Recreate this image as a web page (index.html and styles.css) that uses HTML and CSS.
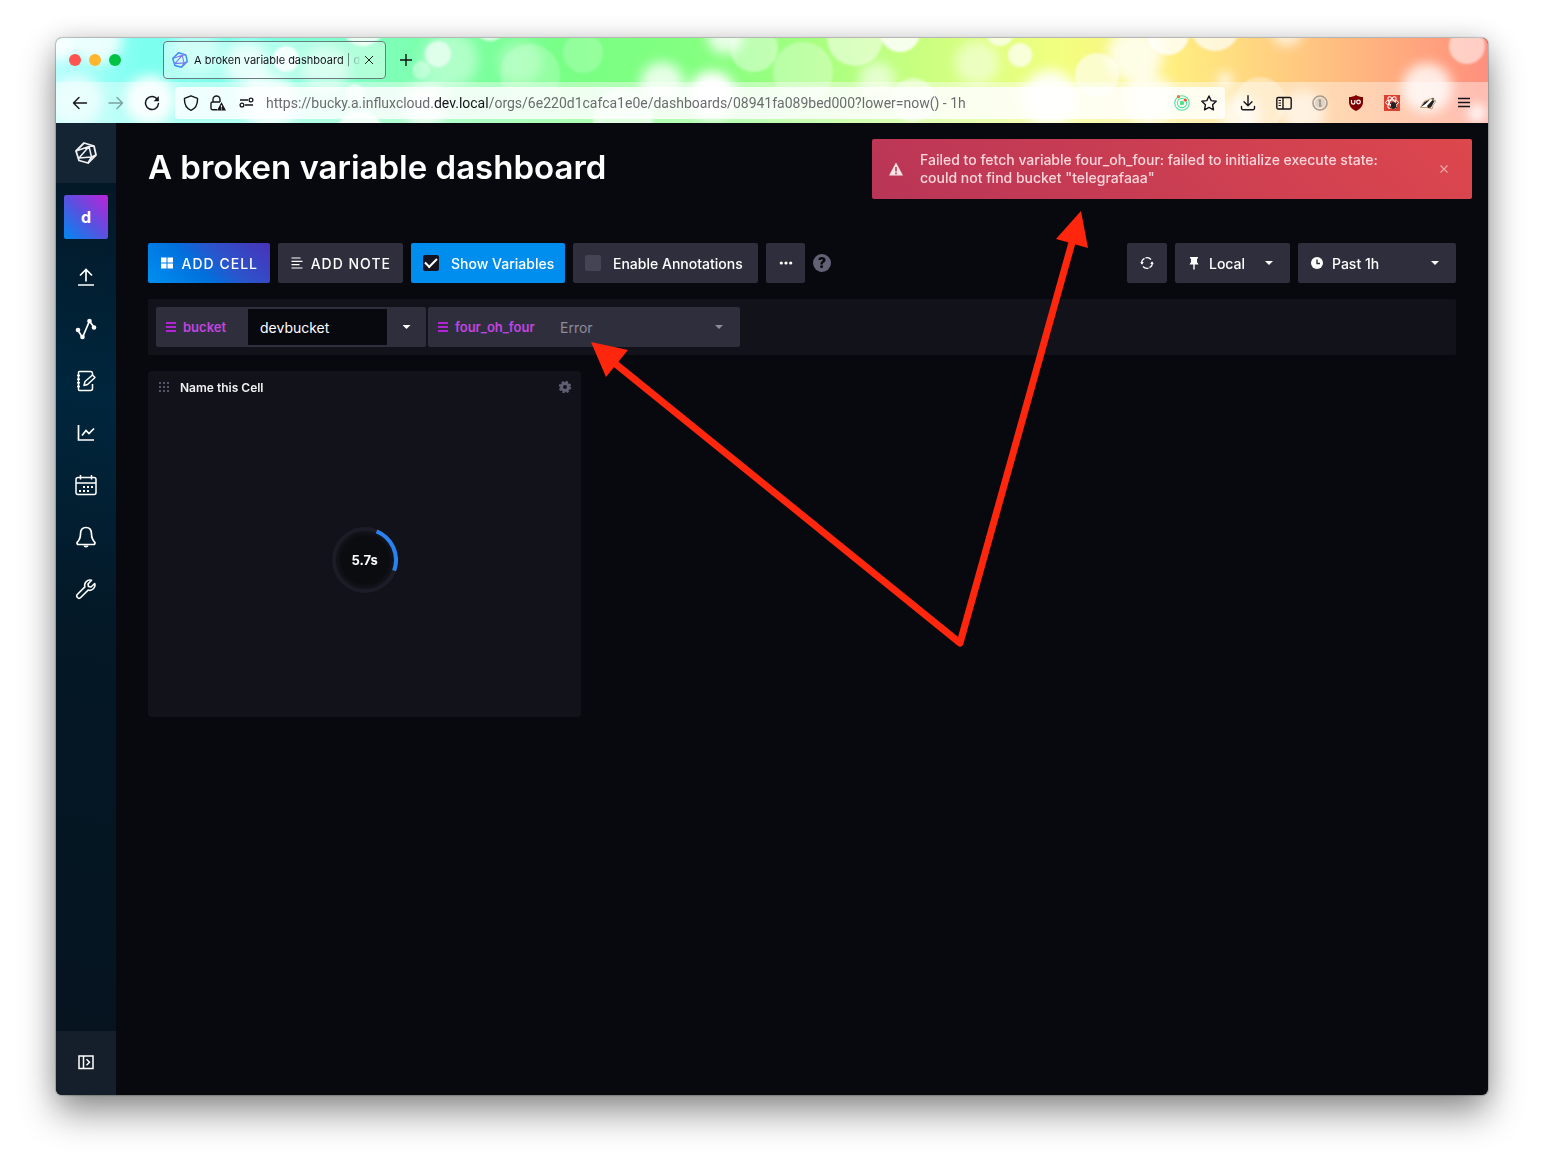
FILE: index.html
```html
<!DOCTYPE html>
<html lang="en">
<head>
    <meta charset="UTF-8" />
    <title>A broken variable dashboard | dev</title>
    <link rel="stylesheet" href="styles.css">
</head>
<body>

<div class="window">

    <header class="chrome">
        <!-- bokeh theme -->
        <svg class="theme" viewBox="56 38 1432 85" preserveAspectRatio="none" aria-hidden="true">
            <defs>
                <linearGradient id="rainbow">
                    <stop offset="0" stop-color="#b4fdfd" />
                    <stop offset="0.06" stop-color="#7dfff0" />
                    <stop offset="0.14" stop-color="#7dffe8" />
                    <stop offset="0.24" stop-color="#7dffb4" />
                    <stop offset="0.36" stop-color="#78ff84" />
                    <stop offset="0.46" stop-color="#86ff80" />
                    <stop offset="0.6" stop-color="#c8ff80" />
                    <stop offset="0.7" stop-color="#f2ff80" />
                    <stop offset="0.78" stop-color="#ffee80" />
                    <stop offset="0.87" stop-color="#ffc880" />
                    <stop offset="1" stop-color="#ff8f7d" />
                </linearGradient>
                <filter id="soft" x="-50%" y="-50%" width="200%" height="200%"><feGaussianBlur stdDeviation="6" /></filter>
                <filter id="edge" x="-20%" y="-20%" width="140%" height="140%"><feGaussianBlur stdDeviation="1" /></filter>
            </defs>
            <rect x="56" y="38" width="1432" height="85" fill="url(#rainbow)" />
            <g fill="#fff" filter="url(#soft)">
                <circle cx="60" cy="45" r="16" opacity=".9" />
                <circle cx="98" cy="40" r="24" opacity=".8" />
                <circle cx="77" cy="100" r="26" opacity=".6" />
                <circle cx="150" cy="100" r="25" opacity=".9" />
                <circle cx="195" cy="50" r="24" opacity=".4" />
                <circle cx="247" cy="64" r="22" opacity=".7" />
                <circle cx="270" cy="102" r="28" opacity=".8" />
                <circle cx="325" cy="70" r="24" opacity=".5" />
                <circle cx="425" cy="105" r="22" opacity=".8" />
                <circle cx="450" cy="60" r="28" opacity=".4" />
                <circle cx="520" cy="62" r="22" opacity=".3" />
                <circle cx="662" cy="84" r="22" opacity=".8" />
                <circle cx="712" cy="95" r="24" />
                <circle cx="725" cy="36" r="18" opacity=".8" />
                <circle cx="877" cy="80" r="18" opacity=".6" />
                <circle cx="977" cy="63" r="22" opacity=".5" />
                <circle cx="1050" cy="98" r="28" opacity=".9" />
                <circle cx="1135" cy="55" r="28" opacity=".8" />
                <circle cx="1150" cy="100" r="26" opacity=".7" />
                <circle cx="1225" cy="80" r="7" />
                <circle cx="1240" cy="115" r="20" opacity=".7" />
                <circle cx="1303" cy="112" r="22" opacity=".6" />
                <circle cx="1287" cy="30" r="16" opacity=".7" />
                <circle cx="1427" cy="88" r="25" opacity=".8" />
                <circle cx="1477" cy="113" r="9" />
            </g>
            <g fill="#fff" filter="url(#edge)">
                <circle cx="286" cy="59" r="13" opacity=".85" />
                <circle cx="363" cy="24" r="22" opacity=".8" />
                <circle cx="438" cy="54" r="13" opacity=".6" />
                <circle cx="421" cy="70" r="9" opacity=".4" />
                <circle cx="360" cy="135" r="24" opacity=".8" />
                <circle cx="355" cy="93" r="9" opacity=".6" />
                <circle cx="490" cy="24" r="17" opacity=".7" />
                <circle cx="530" cy="74" r="30" opacity=".2" />
                <circle cx="583" cy="53" r="20" opacity=".2" />
                <circle cx="623" cy="118" r="30" opacity=".6" />
                <circle cx="754" cy="48" r="24" opacity=".4" />
                <circle cx="803" cy="72" r="30" opacity=".3" />
                <circle cx="855" cy="38" r="28" opacity=".5" />
                <circle cx="900" cy="32" r="20" opacity=".85" />
                <circle cx="913" cy="100" r="22" opacity=".5" />
                <circle cx="1000" cy="32" r="14" opacity=".7" />
                <circle cx="1020" cy="55" r="12" opacity=".7" />
                <circle cx="1097" cy="75" r="22" opacity=".6" />
                <circle cx="1168" cy="34" r="21" opacity=".8" />
                <circle cx="1215" cy="26" r="25" opacity=".7" />
                <circle cx="1260" cy="103" r="26" opacity=".35" />
                <circle cx="1467" cy="46" r="18" opacity=".55" />
            </g>
        </svg>

        <div class="tab-bar">
            <div class="lights">
                <span class="light light-red"></span>
                <span class="light light-yellow"></span>
                <span class="light light-green"></span>
            </div>
            <div class="tab">
                <svg width="16" height="16" viewBox="0 0 22 22" fill="none" stroke="#3a8cf5" stroke-width="2" stroke-linejoin="round">
                    <path d="M1 9L9 1l10 3 2 9-8 8-9-2.500z" />
                    <path d="M1 9l13-4.500L19 4M14 4.500L4 16l12.500-1M16.500 15L21 13M16.500 15L13 21M16.500 15L14 4.500" stroke="#7d78f2" stroke-width="1.500" />
                </svg>
                <span class="tab-title">A broken variable dashboard | d</span>
                <button class="tab-close" type="button" aria-label="Close tab">
                    <svg width="10" height="10" viewBox="0 0 10 10" fill="none" stroke="#222"><path d="M1 1l8 8M9 1L1 9" /></svg>
                </button>
            </div>
            <button class="new-tab" type="button" aria-label="New tab">
                <svg width="14" height="14" viewBox="0 0 14 14" fill="none" stroke="#111" stroke-width="1.400"><path d="M7 1v12M1 7h12" /></svg>
            </button>
        </div>

        <div class="nav-bar">
            <button class="nav-btn" type="button" aria-label="Back">
                <svg width="16" height="16" viewBox="0 0 16 16" fill="none" stroke="#15141a" stroke-width="1.400" stroke-linecap="round" stroke-linejoin="round"><path d="M14.500 8H1.500M7 2.500L1.500 8 7 13.500" /></svg>
            </button>
            <button class="nav-btn nav-off" type="button" aria-label="Forward" disabled>
                <svg width="16" height="16" viewBox="0 0 16 16" fill="none" stroke="#15141a" stroke-width="1.400" stroke-linecap="round" stroke-linejoin="round"><path d="M1 8h13.500M9 2.500L14.500 8 9 13.500" /></svg>
            </button>
            <button class="nav-btn" type="button" aria-label="Reload">
                <svg width="16" height="16" viewBox="0 0 16 16" fill="none" stroke="#15141a" stroke-width="1.500" stroke-linecap="round"><path d="M13.500 4.500A6.500 6.500 0 1 0 14.500 8.500" /><path d="M14.800 1v5.200H9.600z" fill="#15141a" stroke="none" /></svg>
            </button>

            <div class="url-bar">
                <svg width="16" height="16" viewBox="0 0 16 16" fill="none" stroke="#15141a" stroke-width="1.400" stroke-linejoin="round"><path d="M8 .8l6.500 2.500c.3 5.500-1.500 10-6.500 12C3 13.300 1.200 8.800 1.500 3.300z" /></svg>
                <svg width="16" height="16" viewBox="0 0 16 16" fill="none" stroke="#15141a" stroke-width="1.400"><path d="M7 14.800H2.500A1.500 1.500 0 0 1 1 13.300V8.500A1.500 1.500 0 0 1 2.500 7h7.500M3 7V4.500a3.500 3.500 0 0 1 7 0V7" /><path d="M11.500 7L16 15.500H7z" fill="#15141a" stroke="none" /><path d="M11.500 10.200v2.400M11.500 13.500v1" stroke="#fff" stroke-width="1.200" /></svg>
                <svg width="18" height="16" viewBox="0 0 18 16" fill="none" stroke="#15141a" stroke-width="1.300"><path d="M3 5h8M8 10h8" /><circle cx="14" cy="5" r="1.900" /><circle cx="5" cy="10" r="1.900" /></svg>
                <div class="url" role="textbox" aria-label="Address">https://bucky.a.influxcloud.<span class="url-host">dev.local</span>/orgs/6e220d1cafca1e0e/dashboards/08941fa089bed000?lower=now() - 1h</div>
                <svg width="16" height="16" viewBox="0 0 16 16" fill="none" stroke="#4fe0a8" stroke-width="1.100"><circle cx="8" cy="8" r="7.300" /><circle cx="8" cy="8" r="4.600" /><circle cx="8" cy="8" r="2.200" fill="#4fe08a" stroke="none" /><circle cx="4.500" cy="1.700" r="1.600" fill="#f0743a" stroke="none" /><circle cx="11.300" cy="5" r="1.600" fill="#f0502a" stroke="none" /></svg>
                <svg width="16" height="16" viewBox="0 0 16 16" fill="none" stroke="#15141a" stroke-width="1.400" stroke-linejoin="round"><path d="M8 1l2.200 4.600 5 .7-3.600 3.500.9 5L8 12.400 3.500 14.800l.9-5L.8 6.300l5-.7z" /></svg>
            </div>

            <button class="nav-btn" type="button" aria-label="Downloads">
                <svg width="16" height="16" viewBox="0 0 16 16" fill="none" stroke="#15141a" stroke-width="1.400" stroke-linecap="round" stroke-linejoin="round"><path d="M8 .8v9.700M4 6.800l4 4 4-4M1.500 11.500v1.700a1.500 1.500 0 0 0 1.500 1.500h10a1.500 1.500 0 0 0 1.500-1.500v-1.700" /></svg>
            </button>
            <button class="nav-btn" type="button" aria-label="Sidebars">
                <svg width="16" height="16" viewBox="0 0 16 16" fill="none" stroke="#15141a" stroke-width="1.400"><rect x=".8" y="2.500" width="14.400" height="11.500" rx="1.500" /><path d="M7 2.500V14" /><path d="M2.500 5.500H5M2.500 8H5M2.500 10.500H5" stroke-width="1.100" /></svg>
            </button>
            <button class="nav-btn" type="button" aria-label="Password manager">
                <svg width="16" height="16" viewBox="0 0 16 16" fill="none" stroke="#a69b90" stroke-width="1.600"><circle cx="8" cy="8" r="7" /><circle cx="8" cy="8" r="5" fill="#ddd2c6" stroke="none" /><path d="M8 4.500v7M6.500 5.200H8M7 10.800h2.500" stroke-width="2" /></svg>
            </button>
            <button class="nav-btn" type="button" aria-label="uBlock Origin">
                <svg width="16" height="16" viewBox="0 0 16 16"><path d="M8 0c2 1.500 4.500 2 7 2v5c0 4.500-3 7-7 9-4-2-7-4.500-7-9V2c2.500 0 5-.5 7-2z" fill="#800000" /><path d="M3.500 5v2.500a1.700 1.700 0 0 0 3.400 0V5" fill="none" stroke="#fff" stroke-width="1.200" /><circle cx="10.500" cy="7" r="1.800" fill="none" stroke="#fff" stroke-width="1.200" /></svg>
            </button>
            <button class="nav-btn" type="button" aria-label="React tools">
                <svg width="16" height="16" viewBox="0 0 16 16"><rect width="16" height="16" fill="#d9402f" /><g fill="none" stroke="#fff"><ellipse cx="8" cy="7.500" rx="6.500" ry="2.500" /><ellipse cx="8" cy="7.500" rx="6.500" ry="2.500" transform="rotate(60 8 7.500)" /><ellipse cx="8" cy="7.500" rx="6.500" ry="2.500" transform="rotate(-60 8 7.500)" /></g><ellipse cx="9.500" cy="10.500" rx="2.600" ry="3.500" fill="#222" /><path d="M6 8l7 5M13 8l-7 5" stroke="#222" /></svg>
            </button>
            <button class="nav-btn" type="button" aria-label="Privacy Badger">
                <svg width="16" height="16" viewBox="0 0 16 16"><path d="M.5 12.500L4 6.500 10 4l3.500-1 .5 2.500 2 .5-3 4.500-1 3.500-5-1.500z" fill="#fff" stroke="#b8793c" stroke-width=".7" /><path d="M1 12l3.500-5L10 4.500 5.500 9zM7 11l5.500-6 2 1L11 12.500l-3 .5zM11 4l2.500-1v2z" fill="#222" /></svg>
            </button>
            <button class="nav-btn" type="button" aria-label="Menu">
                <svg width="16" height="16" viewBox="0 0 16 16" fill="none" stroke="#15141a" stroke-width="1.300"><path d="M2 3.500h12M2 7.500h12M2 11.500h12" /></svg>
            </button>
        </div>
    </header>

    <div class="app">
        <nav class="side">
            <a class="side-logo" href="#" aria-label="Home">
                <svg width="22" height="22" viewBox="0 0 22 22" fill="none" stroke="#f1f1f3" stroke-width="1.800" stroke-linejoin="round"><path d="M1 9L9 1l10 3 2 9-8 8-9-2.500z" /><path d="M1 9l13-4.500L19 4M14 4.500L4 16l12.500-1M16.500 15L21 13M16.500 15L13 21M16.500 15L14 4.500" stroke-width="1.500" /></svg>
            </a>
            <a class="avatar" href="#">d</a>
            <a class="side-item" href="#" aria-label="Load data">
                <svg width="22" height="22" viewBox="0 0 22 22" fill="none" stroke="#fff" stroke-width="1.700"><path d="M11 15.500V3.500M5 9.500L11 3.500 17 9.500M3 19h16" /></svg>
            </a>
            <a class="side-item" href="#" aria-label="Data explorer">
                <svg width="22" height="22" viewBox="0 0 22 22" fill="none" stroke="#fff" stroke-width="1.700"><path d="M3 12.500l4.500 7L14.500 3 19.500 10" /><g fill="#fff" stroke="none"><circle cx="3" cy="12" r="2.300" /><circle cx="7.500" cy="19" r="2.300" /><circle cx="14.500" cy="3" r="2.300" /><circle cx="19" cy="9.500" r="2.300" /></g></svg>
            </a>
            <a class="side-item" href="#" aria-label="Notebooks">
                <svg width="22" height="22" viewBox="0 0 22 22" fill="none" stroke="#fff" stroke-width="1.500" stroke-linejoin="round"><path d="M17.500 5V3.300A2 2 0 0 0 15.500 1.500h-11a1 1 0 0 0-1 1v17a1 1 0 0 0 1 1h11a2 2 0 0 0 2-2V14" /><path d="M2 5.500h3M2 9.200h3M2 12.800h3M2 16.500h3" /><path d="M9 15.500l1-4 7.500-6.500 2.500 2.500-7.500 7z" /></svg>
            </a>
            <a class="side-item" href="#" aria-label="Dashboards">
                <svg width="22" height="22" viewBox="0 0 22 22" fill="none" stroke="#fff" stroke-width="1.700"><path d="M3.500 3v15H19M7 13.500L11 8.500l3 3L19 6.500" /></svg>
            </a>
            <a class="side-item" href="#" aria-label="Tasks">
                <svg width="22" height="22" viewBox="0 0 22 22" fill="none" stroke="#fff" stroke-width="1.500"><rect x="1" y="3.500" width="20" height="17" rx="2" /><path d="M1 9h20M5.500 1v4.500M16.500 1v4.500" /><path d="M8 13h2M12 13h2M16 13h2M4 17h2M8 17h2M12 17h2" stroke-width="2" /></svg>
            </a>
            <a class="side-item" href="#" aria-label="Alerts">
                <svg width="22" height="22" viewBox="0 0 22 22" fill="none" stroke="#fff" stroke-width="1.700" stroke-linejoin="round"><path d="M11 1.500c4 0 5.500 3 5.500 6.500 0 5 1.500 6.500 3.500 8.500 0 1.500-.5 2-1.500 2h-15c-1 0-1.500-.5-1.500-2 2-2 3.500-3.500 3.500-8.500C5.500 4.500 7 1.500 11 1.500z" /><path d="M8.500 19.500a2.500 2 0 0 0 5 0z" fill="#fff" stroke="none" /></svg>
            </a>
            <a class="side-item" href="#" aria-label="Settings">
                <svg width="22" height="22" viewBox="0 0 22 22" fill="none" stroke="#fff" stroke-width="1.600" stroke-linejoin="round"><path d="M16.500 2.300a5.300 5.300 0 0 0-6.600 6.600L2.500 16.300a2.200 2.200 0 0 0 3.200 3.200l7.400-7.400a5.300 5.300 0 0 0 6.600-6.600L16 9l-2.500-.5L13 6z" /></svg>
            </a>
            <button class="side-toggle" type="button" aria-label="Expand navigation">
                <svg width="16" height="16" viewBox="0 0 16 16" fill="none" stroke="#fff" stroke-width="1.500"><rect x="1" y="1" width="14" height="12.500" /><path d="M5.500 1v12.500M8.500 4.300l3 3-3 3" /></svg>
            </button>
        </nav>

        <main class="page">
            <h1 class="page-title">A broken variable dashboard</h1>

            <div class="toolbar">
                <button class="btn btn-primary" type="button">
                    <svg width="14" height="14" viewBox="0 0 14 14" fill="#fff"><path d="M1 1.500h5.500v5H1zM7.500 1.500H13v5H7.500zM1 7.500h5.500v5H1zM7.500 7.500H13v5H7.500z" /></svg>
                    ADD CELL
                </button>
                <button class="btn btn-note" type="button">
                    <svg width="14" height="14" viewBox="0 0 14 14" fill="none" stroke="#fff" stroke-width="1.200"><path d="M1.500 2h9M1.500 5.300h11M1.500 8.700h8M1.500 12h11" /></svg>
                    ADD NOTE
                </button>
                <label class="toggle toggle-on"><input type="checkbox" checked> Show Variables</label>
                <label class="toggle"><input type="checkbox"> Enable Annotations</label>
                <button class="btn btn-more" type="button" aria-label="More">
                    <svg width="14" height="14" viewBox="0 0 14 14" fill="#fff"><circle cx="2.300" cy="7" r="1.600" /><circle cx="7" cy="7" r="1.600" /><circle cx="11.700" cy="7" r="1.600" /></svg>
                </button>
                <button class="help" type="button" aria-label="Help">?</button>

                <div class="toolbar-right">
                    <button class="btn btn-square" type="button" aria-label="Refresh">
                        <svg width="14" height="14" viewBox="0 0 14 14" fill="none" stroke="#fff" stroke-width="1.200"><path d="M1.800 8A5.200 5.200 0 0 1 4.500 2.400M5.500 1.900a5.200 5.200 0 0 1 5.500 1.600M12.200 6a5.200 5.200 0 0 1-2.700 5.600M8.500 12.100A5.200 5.200 0 0 1 3 10.500" /><path d="M.3 6h3.400L2 8.800zM10.300 8h3.400L12 5.200z" fill="#fff" stroke="none" /></svg>
                    </button>
                    <div class="picker picker-zone">
                        <svg width="14" height="14" viewBox="0 0 14 14" fill="#fff"><path d="M3 1h8v1.500h-1V6l1.500 2.500h-9L4 6V2.500H3zM6.300 8.500h1.400v5H6.300z" /></svg>
                        <select aria-label="Time zone"><option>Local</option><option>UTC</option></select>
                        <span class="caret"></span>
                    </div>
                    <div class="picker picker-range">
                        <svg width="14" height="14" viewBox="0 0 14 14"><circle cx="7" cy="7" r="6" fill="#fff" /><path d="M7 3.500V7.500h3" fill="none" stroke="#2e2d3d" stroke-width="1.400" /></svg>
                        <select aria-label="Time range"><option>Past 1h</option><option>Past 6h</option></select>
                        <span class="caret"></span>
                    </div>
                </div>
            </div>

            <div class="variables">
                <div class="variable">
                    <label class="variable-name" for="bucket"><span class="bars"></span>bucket</label>
                    <input class="variable-input" type="text" id="bucket" value="devbucket">
                    <button class="variable-open" type="button" aria-label="Open bucket list"><span class="caret"></span></button>
                </div>
                <div class="variable variable-error">
                    <label class="variable-name" for="fourOhFour"><span class="bars"></span>four_oh_four</label>
                    <select id="fourOhFour" disabled><option>Error</option></select>
                    <span class="caret"></span>
                </div>
            </div>

            <div class="cells">
                <section class="cell">
                    <div class="cell-head">
                        <svg width="12" height="12" viewBox="0 0 12 12" fill="#545466"><path d="M1 1h2v2H1zM5 1h2v2H5zM9 1h2v2H9zM1 5h2v2H1zM5 5h2v2H5zM9 5h2v2H9zM1 9h2v2H1zM5 9h2v2H5zM9 9h2v2H9z" /></svg>
                        <h2 class="cell-name">Name this Cell</h2>
                        <button class="cell-gear" type="button" aria-label="Configure cell">
                            <svg width="14" height="14" viewBox="0 0 14 14" fill="none" stroke="#5f5e74"><circle cx="7" cy="7" r="3.500" stroke-width="3" /><circle cx="7" cy="7" r="5.300" stroke-width="1.800" stroke-dasharray="2.400 1.763" /></svg>
                        </button>
                    </div>
                    <div class="cell-body">
                        <div class="timer">
                            <svg class="timer-ring" viewBox="0 0 66 66" fill="none" stroke-width="4">
                                <circle cx="33" cy="33" r="31" stroke="#1c1c27" />
                                <path d="M44.600 4.300A31 31 0 0 1 62.100 43.600" stroke="#2a82f0" />
                            </svg>
                            <span class="timer-text">5.7s</span>
                        </div>
                    </div>
                </section>
            </div>
        </main>

        <div class="alert" role="alert">
            <svg width="14" height="14" viewBox="0 0 14 14"><path d="M7 .5L14 13.500H0z" fill="#fbe3e6" /><path d="M7 5v4.500M7 10.500v1.700" stroke="#bd3a55" stroke-width="1.600" /></svg>
            <p class="alert-text">Failed to fetch variable four_oh_four: failed to initialize execute state: could not find bucket "telegrafaaa"</p>
            <button class="alert-close" type="button" aria-label="Dismiss">
                <svg width="8" height="8" viewBox="0 0 8 8" fill="none" stroke="#f0a5a9" stroke-width="1.200"><path d="M.5 .5l7 7M7.500 .5l-7 7" /></svg>
            </button>
        </div>
    </div>

    <!-- annotation arrows -->
    <svg class="arrows" viewBox="0 0 1432 1057" preserveAspectRatio="xMinYMin meet" aria-hidden="true">
        <path d="M556 323L904 605L1017 201" fill="none" stroke="#ff260e" stroke-width="7" stroke-linejoin="round" />
        <path d="M535 304L572 312L550 339zM1025 173L1000 201L1032 210z" fill="#ff260e" />
    </svg>
</div>

</body>
</html>
```

FILE: styles.css
```css
* {
    box-sizing: border-box;
}
body {
    display: flex;
    min-height: 100vh;
    margin: 0;
    padding: 38px 56px 74px;
    background: #fff;
    font-family: Inter, "Liberation Sans", sans-serif;
    font-size: 14px;
    color: #fff;
}
button, input, select {
    margin: 0;
    padding: 0;
    border: 0;
    background: none;
    font: inherit;
    color: inherit;
}
svg {
    display: block;
    flex: none;
}
a {
    color: inherit;
    text-decoration: none;
}

.window {
    position: relative;
    flex: 1;
    min-width: 0;
    display: flex;
    flex-direction: column;
    border-radius: 6px;
    overflow: hidden;
    background: #08090f;
    box-shadow: 0 0 1px 1px rgba(0, 0, 0, 0.2), 0 0 24px rgba(0, 0, 0, 0.12), 0 18px 36px rgba(0, 0, 0, 0.42);
}

/* browser */
.chrome {
    position: relative;
    color: #15141a;
}
.theme {
    position: absolute;
    inset: 0;
    width: 100%;
    height: 100%;
}
.tab-bar {
    position: relative;
    display: flex;
    align-items: center;
    height: 44px;
    padding: 0 13px;
}
.lights {
    display: flex;
    gap: 8px;
    margin-right: 42px;
}
.light {
    width: 12px;
    height: 12px;
    border-radius: 50%;
}
.light-red {
    background: #ff544d;
}
.light-yellow {
    background: #ffb52e;
}
.light-green {
    background: #00c344;
}
.tab {
    display: flex;
    align-items: center;
    gap: 6px;
    width: 223px;
    height: 38px;
    padding: 0 8px;
    border: 1px solid #6b7a7c;
    border-radius: 4px;
    background: rgba(255, 255, 255, 0.4);
}
.tab-title {
    flex: 1;
    white-space: nowrap;
    font-size: 11px;
    -webkit-mask-image: linear-gradient(to left, transparent, #000 20px);
    mask-image: linear-gradient(to left, transparent, #000 20px);
}
.tab-close {
    display: grid;
    place-items: center;
    width: 16px;
    height: 16px;
    margin-left: -6px;
}
.new-tab {
    display: grid;
    place-items: center;
    width: 28px;
    height: 28px;
    margin-left: 6px;
}
.nav-bar {
    position: relative;
    display: flex;
    align-items: center;
    height: 41px;
    padding: 0 6px;
    background: rgba(255, 255, 255, 0.4);
}
.nav-btn {
    display: grid;
    place-items: center;
    flex: none;
    width: 36px;
    height: 32px;
}
.nav-off {
    opacity: 0.4;
}
.url-bar {
    flex: 1;
    min-width: 0;
    display: flex;
    align-items: center;
    gap: 11px;
    height: 32px;
    margin: 0 5px;
    padding: 0 8px;
    border-radius: 4px;
    background: rgba(255, 255, 255, 0.8);
}
.url {
    flex: 1;
    overflow: hidden;
    white-space: nowrap;
    font-family: Roboto, "Liberation Sans", sans-serif;
    font-size: 14px;
    color: #6c6c70;
}
.url-host {
    color: #15141a;
}

/* app */
.app {
    position: relative;
    flex: 1;
    display: flex;
}
.side {
    display: flex;
    flex-direction: column;
    align-items: center;
    width: 60px;
    background: linear-gradient(190deg, #041420 0%, #00263d 28%, #041826 52%, #06131f 100%);
}
.side-logo {
    display: grid;
    place-items: center;
    width: 100%;
    height: 60px;
    margin-bottom: 12px;
    background: #142433;
}
.avatar {
    display: grid;
    place-items: center;
    width: 44px;
    height: 44px;
    margin-bottom: 12px;
    border-radius: 2px;
    background: linear-gradient(45deg, #0088f0 0%, #5a50e0 50%, #be22d8 100%);
    font-size: 16px;
    font-weight: 700;
}
.side-item {
    display: grid;
    place-items: center;
    width: 100%;
    height: 52px;
}
.side-toggle {
    display: grid;
    place-items: center;
    width: 100%;
    height: 64px;
    margin-top: auto;
    background: #141f2b;
}
.page {
    flex: 1;
    min-width: 0;
    padding: 24px 32px;
}
.page-title {
    margin: 0 0 56px;
    font-size: 33px;
    line-height: 40px;
    font-weight: 600;
}
.toolbar {
    display: flex;
    align-items: center;
    gap: 8px;
    margin-bottom: 16px;
    font-weight: 500;
}
.toolbar-right {
    display: flex;
    gap: 8px;
    margin-left: auto;
}
.btn, .toggle, .picker {
    display: flex;
    align-items: center;
    height: 40px;
    padding: 0 12px;
    border-radius: 2px;
    background: #2f2e3d;
    white-space: nowrap;
}
.btn {
    justify-content: space-between;
    letter-spacing: 1px;
}
.btn-primary {
    width: 122px;
    background: linear-gradient(45deg, #0090f0 0%, #0070dc 40%, #2a55cc 60%, #4a32b8 100%);
}
.btn-note {
    width: 125px;
}
.btn-more, .btn-square {
    justify-content: center;
    width: 40px;
    padding: 0;
}
.btn-more {
    width: 39px;
}
.toggle {
    gap: 12px;
    width: 185px;
}
.toggle-on {
    width: 154px;
    background: #008eee;
}
.toggle input {
    flex: none;
    width: 16px;
    height: 16px;
    appearance: none;
    border-radius: 2px;
    background: #454455;
}
.toggle input:checked {
    display: grid;
    place-items: center;
    background: #14131f;
}
.toggle input:checked::after {
    content: "";
    width: 10px;
    height: 5px;
    margin-bottom: 3px;
    border: solid #fff;
    border-width: 0 0 2px 2px;
    transform: rotate(-45deg);
}
.help {
    width: 18px;
    height: 18px;
    border-radius: 50%;
    background: #626175;
    color: #08090f;
    font-size: 14px;
    line-height: 18px;
    font-weight: 900;
}
.picker {
    gap: 8px;
}
.picker-zone {
    width: 115px;
}
.picker-range {
    width: 158px;
}
.picker select, .variable-error select {
    flex: 1;
    min-width: 0;
    appearance: none;
    opacity: 1;
}
.caret {
    flex: none;
    width: 8px;
    height: 4px;
    margin: 0 5px;
    background: currentColor;
    clip-path: polygon(0 0, 100% 0, 50% 100%);
}

.variables {
    display: flex;
    gap: 2px;
    margin-bottom: 16px;
    padding: 8px;
    border-radius: 2px;
    background: #12121a;
}
.variable {
    display: flex;
    width: 270px;
    height: 40px;
    padding: 2px 0;
    border-radius: 2px;
    background: #2f2e3d;
}
.variable-name {
    display: flex;
    align-items: center;
    gap: 7px;
    width: 92px;
    padding-left: 10px;
    font-size: 13px;
    font-weight: 600;
    color: #c245e0;
}
.bars {
    width: 10px;
    height: 10px;
    background: linear-gradient(#b322d6 2px, transparent 2px 4px, #b322d6 4px 6px, transparent 6px 8px, #b322d6 8px);
}
.variable-input {
    width: 139px;
    padding: 0 12px;
    background: #08090f;
}
.variable-open {
    flex: 1;
    display: grid;
    place-items: center;
}
.variable-error {
    align-items: center;
    width: 312px;
    padding-right: 12px;
    color: #8d8c9c;
}
.variable-error .variable-name {
    width: 132px;
}

.cells {
    display: grid;
    grid-template-columns: repeat(3, 1fr);
    gap: 4px;
}
.cell {
    border-radius: 4px;
    background: #12121a;
}
.cell-head {
    display: flex;
    align-items: center;
    gap: 10px;
    height: 32px;
    padding: 0 9px 0 10px;
}
.cell-name {
    margin: 0;
    font-size: 12px;
    font-weight: 600;
    color: #f1f1f3;
}
.cell-gear {
    margin-left: auto;
}
.cell-body {
    display: grid;
    place-items: center;
    height: 314px;
}
.timer {
    display: grid;
    place-items: center;
    width: 66px;
    height: 66px;
    border-radius: 50%;
    background: radial-gradient(closest-side, #0b0c10 72%, #12121a 84%);
}
.timer-ring, .timer-text {
    grid-area: 1 / 1;
}
.timer-ring {
    width: 66px;
    height: 66px;
}
.timer-text {
    font-size: 13px;
    font-weight: 700;
}

.alert {
    position: absolute;
    top: 16px;
    right: 16px;
    display: flex;
    align-items: center;
    gap: 17px;
    width: 600px;
    padding: 12px 24px 12px 17px;
    border-radius: 2px;
    background: linear-gradient(45deg, #b93557, #dd474d);
    color: #fad5da;
}
.alert-text {
    flex: 1;
    margin: 0;
    padding-right: 24px;
    font-size: 14px;
    line-height: 18px;
    font-weight: 500;
}
.alert-close {
    display: grid;
    place-items: center;
}
.arrows {
    position: absolute;
    top: 0;
    left: 0;
    width: 100%;
    pointer-events: none;
}
```
